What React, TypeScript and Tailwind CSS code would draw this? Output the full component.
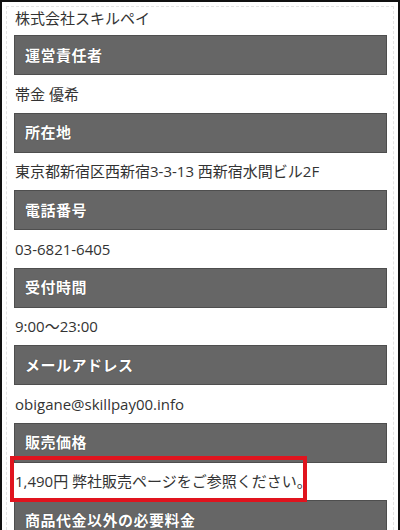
import React from "react";

const font = { fontFamily: '"Open Sans", "Noto Sans CJK JP", sans-serif' };

function Header({ children }: { children: React.ReactNode }) {
  return (
    <div className="h-[40px] shrink-0 flex items-center bg-[#666666] border border-[#4e4e4e] pl-[10px] text-white font-bold text-[15px] tracking-[0.5px] [text-shadow:0_0_1px_rgba(0,0,0,0.5)]">
      {children}
    </div>
  );
}

function Row({ children, h = "h-[37.5px]" }: { children: React.ReactNode; h?: string }) {
  return (
    <div className={`${h} shrink-0 flex items-center pl-[1px] text-[15px] text-[#333333]`}>
      {children}
    </div>
  );
}

export default function App() {
  return (
    <div
      className="relative w-[400px] h-[530px] overflow-hidden bg-white border-t-2 border-l-2 border-r-2 border-[#111111]"
      style={font}
    >
      <div className="absolute top-[4px] left-[4px] right-[4px] bottom-[-10px] border border-dashed border-[#e4e4e4] pointer-events-none" />
      <div className="relative flex flex-col pl-[12px] pr-[11px]">
        <div className="h-[33px] shrink-0 flex items-center pl-[1px] text-[15px] text-[#333333]">
          株式会社スキルペイ
        </div>
        <Header>運営責任者</Header>
        <Row>帯金 優希</Row>
        <Header>所在地</Header>
        <Row>東京都新宿区西新宿3-3-13 西新宿水間ビル2F</Row>
        <Header>電話番号</Header>
        <Row>03-6821-6405</Row>
        <Header>受付時間</Header>
        <Row>9:00〜23:00</Row>
        <Header>メールアドレス</Header>
        <Row>obigane@skillpay00.info</Row>
        <Header>販売価格</Header>
        <div className="relative h-[37.5px] shrink-0 flex items-center pl-[1px] text-[15px] text-[#333333]">
          1,490円 弊社販売ページをご参照ください。
          <div className="absolute left-[-4px] top-[-7px] w-[297px] h-[46px] border-[4px] border-[#e0141e]" />
        </div>
        <Header>商品代金以外の必要料金</Header>
      </div>
    </div>
  );
}
